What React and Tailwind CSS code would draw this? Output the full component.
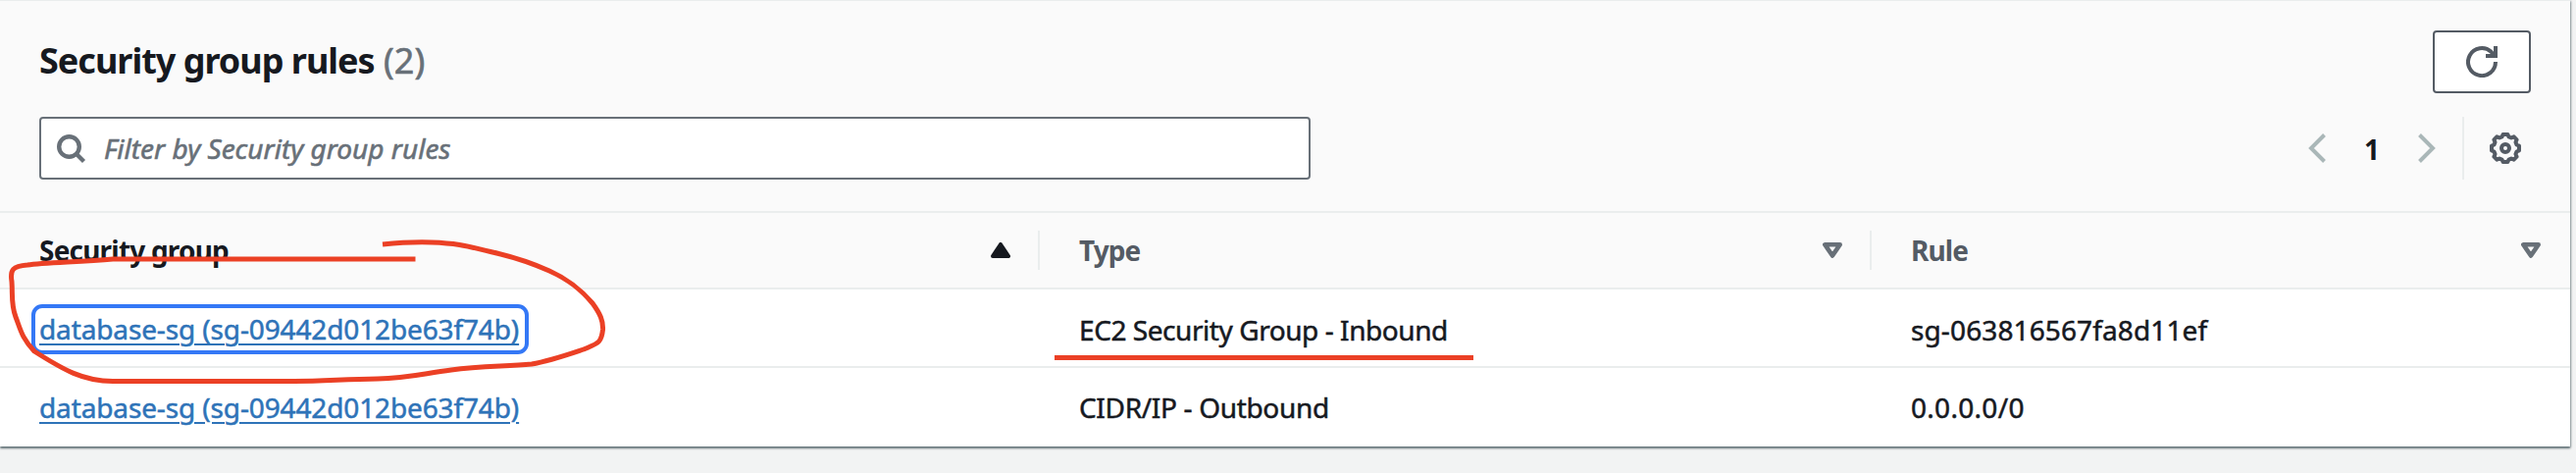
const GearIcon = () => (
  <svg width="32" height="32" viewBox="0 0 32 32" fill="none" stroke="#545b64" strokeWidth="4" strokeLinejoin="round">
    <path d="M13.6 2h4.800l1.100 2.500 2.500 1 2.700-1.100 2.900 2.900-1.100 2.700 1 2.500 2.500 1.100v4.800l-2.500 1.100-1 2.500 1.100 2.700-2.900 2.900-2.700-1.100-2.500 1-1.100 2.500h-4.800l-1.100-2.500-2.500-1-2.700 1.100-2.900-2.900 1.100-2.700-1-2.500-2.500-1.100v-4.800l2.500-1.100 1-2.500-1.100-2.700 2.900-2.900 2.700 1.100 2.500-1z" />
    <circle cx="16" cy="16" r="4" />
  </svg>
);

const RefreshIcon = () => (
  <svg width="32" height="32" viewBox="0 0 32 32" fill="none" stroke="#545b64" strokeWidth="4">
    <path d="M30 16A14 14 0 1 1 25.500 5.800L29 10" />
    <path d="M20 10h10V0" />
  </svg>
);

const SearchIcon = () => (
  <svg width="32" height="32" viewBox="0 0 32 32" fill="none" stroke="#687078" strokeWidth="4.4">
    <circle cx="14.5" cy="14.5" r="10.3" />
    <path d="M21.500 21.500l8 8" />
  </svg>
);

const Chevron = ({ right }) => (
  <svg width="20" height="32" viewBox="0 0 20 32" fill="none" stroke="#aab7b8" strokeWidth="4">
    <path d={right ? "M2.500 2.500L16 16 2.500 29.500" : "M17.500 2.500L4 16l13.500 13.500"} />
  </svg>
);

const SortIcon = ({ active }) => (
  <svg width="20" height="16" viewBox="0 0 20 16" strokeLinejoin="round">
    {active ? (
      <path d="M10 2L18 14H2z" fill="#16191f" stroke="#16191f" strokeWidth="4" />
    ) : (
      <path d="M2.300 2.300h15.400L10 13.500z" fill="none" stroke="#687078" strokeWidth="4.6" />
    )}
  </svg>
);

const rows = [
  {
    group: "database-sg (sg-09442d012be63f74b)",
    type: "EC2 Security Group - Inbound",
    typeTracking: "tracking-[-0.44px]",
    rule: "sg-063816567fa8d11ef",
    ruleTracking: "tracking-[0.12px]",
    focused: true,
  },
  {
    group: "database-sg (sg-09442d012be63f74b)",
    type: "CIDR/IP - Outbound",
    typeTracking: "tracking-[-0.33px]",
    rule: "0.0.0.0/0",
    ruleTracking: "tracking-[0.3px]",
  },
];

const COLS = "grid grid-cols-[1060px_848px_712px]";

export default function App() {
  return (
    <div className="relative h-[482px] w-[2626px] overflow-hidden bg-[#f2f3f3] font-['Noto_Sans',sans-serif] text-[28px] leading-[40px] text-[#16191f]">
      <section className="h-[455px] w-[2620px] border-t border-[#eaeded] bg-white shadow-[0_2px_2px_0_rgba(0,28,36,0.5),1px_1px_2px_0_rgba(0,28,36,0.3)]">
        <header className="h-[216px] border-b-2 border-[#eaeded] bg-[#fafafa] pt-[30px] pr-10 pl-10">
          <div className="flex h-16 items-center justify-between">
            <h1 className="-mt-0.5 text-[36px] leading-[44px] font-bold tracking-[-1px] whitespace-pre">
              Security group rules <span className="ml-px font-normal tracking-normal text-[#687078] [-webkit-text-stroke:0.6px]">(2)</span>
            </h1>
            <button className="flex h-16 w-[100px] items-center justify-center rounded-[4px] border-2 border-[#545b64] bg-white">
              <RefreshIcon />
            </button>
          </div>
          <div className="mt-6 flex h-16 items-center justify-between">
            <div className="flex h-16 w-[1296px] items-center rounded-[4px] border-2 border-[#687078] bg-white pl-3.5">
              <SearchIcon />
              <span className="ml-[18px] text-[#687078] italic [-webkit-text-stroke:0.6px]">Filter by Security group rules</span>
            </div>
            <div className="flex h-16 items-center">
              <Chevron />
              <span className="w-[92px] pt-0.5 text-center font-bold">1</span>
              <Chevron right />
              <div className="mr-[26px] ml-[26px] h-16 w-0.5 bg-[#eaeded]" />
              <div className="mr-2.5"><GearIcon /></div>
            </div>
          </div>
        </header>
        <div className={COLS + " h-[78px] items-center border-b-2 border-[#eaeded] bg-[#fafafa] font-bold text-[#545b64]"}>
          <div className="flex h-10 items-center justify-between border-r-2 border-[#eaeded] pr-7 pl-10">
            <span className="tracking-[-0.8px] text-[#16191f]">Security group</span>
            <SortIcon active />
          </div>
          <div className="flex h-10 items-center justify-between border-r-2 border-[#eaeded] pr-7 pl-10">
            <span className="tracking-[-0.9px]">Type</span>
            <SortIcon />
          </div>
          <div className="flex h-10 items-center justify-between pr-[30px] pl-10">
            <span className="tracking-[-0.9px]">Rule</span>
            <SortIcon />
          </div>
        </div>
        {rows.map((r, i) => (
          <div
            key={i}
            className={COLS + " items-center [-webkit-text-stroke:0.5px]" + (i === 0 ? " h-20 border-b-2 border-[#eaeded] pt-[3px]" : " h-20")}
          >
            <div className="flex pl-10">
              <a
                className={
                  "pr-0.5 leading-[35px] tracking-[-0.13px] text-[#2e73b8] underline decoration-2 underline-offset-[4px]" +
                  (r.focused ? " rounded-[3px] outline-4 outline-offset-4 outline-[#3478f6]" : "")
                }
              >
                {r.group}
              </a>
            </div>
            <div className={"pl-10 " + r.typeTracking}>{r.type}</div>
            <div className={"pl-10 " + r.ruleTracking}>{r.rule}</div>
          </div>
        ))}
      </section>
      <svg className="absolute top-0 left-0" width="2626" height="482" fill="none" stroke="#eb4025" strokeWidth="5">
        <path d="M390 249C415 246.500 425 246.500 440 247C470 248 480 252 500 256.500C525 262 540 267 560 276C580 285 592 295 604 309C612 320 615 327 614.500 336C613 350 609 350 595 356C580 361 560 368 542 371C515 373.500 490 373 460 377C430 381 415 385.500 385 386C350 386.500 330 388.500 300 388.500H115C85 388.500 65 377 35 358C22 344 21 336 16 323C11 310 13 300 12 287C10 275 13 271 28 270C45 267.500 80 267 115 264H423.500" />
        <path d="M1075 364.500H1502" />
      </svg>
    </div>
  );
}
